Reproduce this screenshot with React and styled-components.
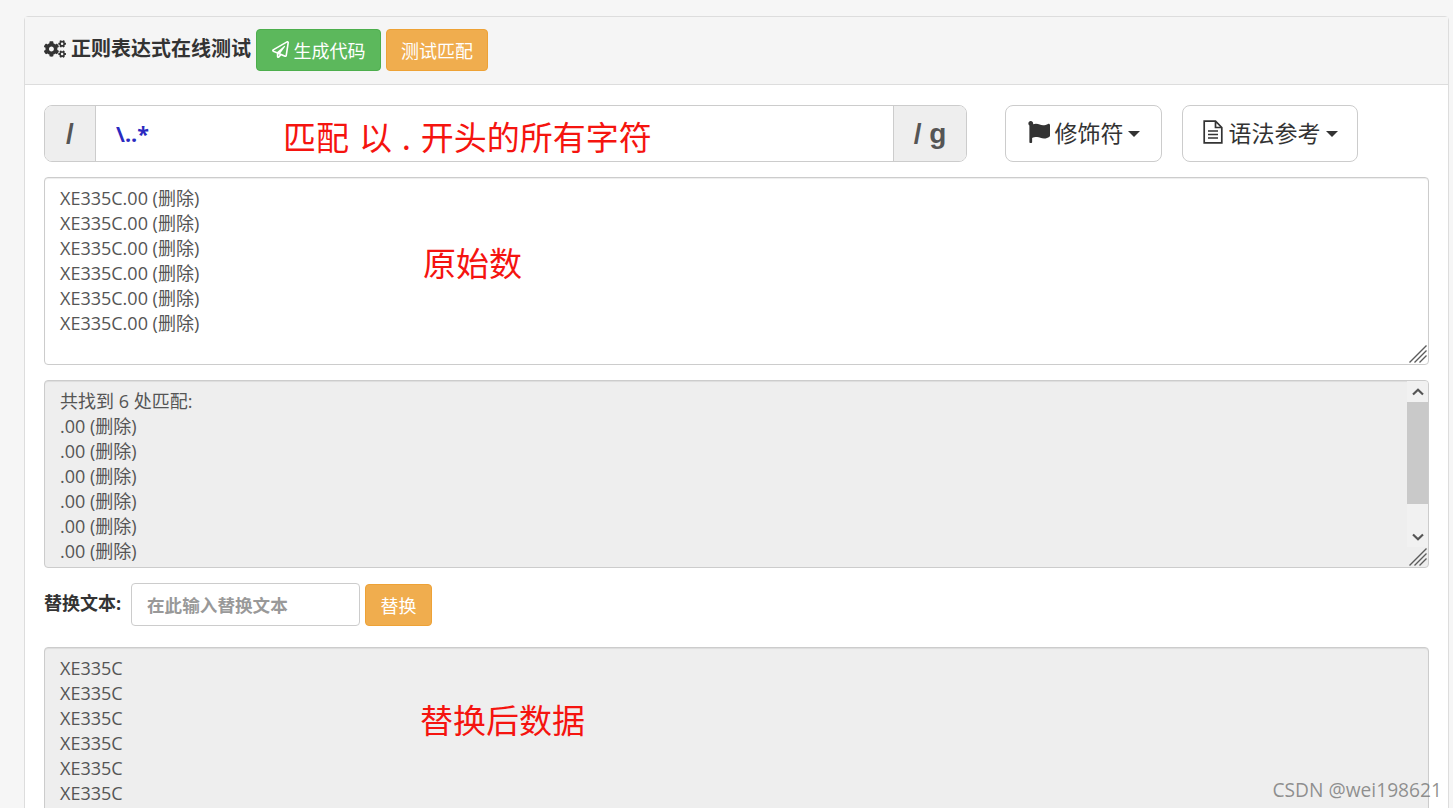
import React from "react";
import styled, { createGlobalStyle } from "styled-components";
import { FaCogs, FaRegPaperPlane, FaFlag } from "react-icons/fa";

const FONT = `"Open Sans", "Noto Sans CJK SC", sans-serif`;

const Global = createGlobalStyle`
  html, body { margin: 0; padding: 0; height: 808px; overflow: hidden; background: #f6f6f6; }
  * { box-sizing: border-box; }
  body { font-family: ${FONT}; color: #333; }
`;

const Page = styled.div`
  position: relative;
  height: 808px;
  overflow: hidden;
  padding: 16px 4px 0 24px;
`;
const Panel = styled.section`
  background: #fff;
  border: 1px solid #ddd;
  border-radius: 4px 4px 0 0;
  height: 840px;
`;
const Header = styled.header`
  display: flex;
  align-items: center;
  height: 68px;
  padding: 0 19px 2px;
  background: #f5f5f5;
  border-bottom: 1px solid #ddd;
`;
const Title = styled.h3`
  display: flex;
  align-items: center;
  gap: 5px;
  margin: -2px 5px 0 0;
  font-size: 20px;
  line-height: 24px;
  font-weight: 700;
  color: #333;
  svg { font-size: 22px; }
`;
const Button = styled.button`
  display: inline-flex;
  align-items: center;
  justify-content: center;
  gap: 5px;
  height: 42px;
  width: ${p => p.$w}px;
  margin-left: ${p => p.$ml || 0}px;
  padding: 0;
  font-family: ${FONT};
  font-size: 18px;
  color: #fff;
  border-radius: 4px;
  border: 1px solid ${p => (p.$variant === "success" ? "#4cae4c" : "#eea236")};
  background: ${p => (p.$variant === "success" ? "#5cb85c" : "#f0ad4e")};
`;
const Body = styled.div`
  display: flex;
  flex-direction: column;
  padding: 20px 19px 0;
`;
const RegexRow = styled.div`
  display: flex;
  align-items: stretch;
  height: 57px;
`;
const InputGroup = styled.div`
  position: relative;
  display: flex;
  width: 923px;
  border: 1px solid #ccc;
  border-radius: 8px;
  overflow: hidden;
`;
const Addon = styled.span`
  display: flex;
  align-items: center;
  justify-content: center;
  width: ${p => p.$w}px;
  flex: none;
  background: #eee;
  color: #555;
  font-size: 28px;
  font-weight: 700;
  font-family: "Liberation Sans", sans-serif;
  border-${p => p.$side}: 1px solid #ccc;
`;
const RegexInput = styled.input`
  flex: 1;
  min-width: 0;
  border: 0;
  outline: 0;
  padding: 0 20px;
  font-family: "Open Sans", sans-serif;
  font-size: 21.5px;
  font-weight: 700;
  color: #2a2ac0;
  background: #fff;
`;
const DropButton = styled.button`
  display: inline-flex;
  align-items: center;
  justify-content: center;
  gap: ${p => p.$gap || 5}px;
  width: ${p => p.$w}px;
  margin-left: ${p => p.$ml}px;
  padding: 0 0 3px;
  background: #fff;
  border: 1px solid #ccc;
  border-radius: 8px;
  color: #333;
  font-family: ${FONT};
  font-size: 23px;
  svg { font-size: 22px; flex: none; }
`;
const Caret = styled.span`
  width: 0;
  height: 0;
  border-top: 6px solid #333;
  border-left: 6px solid transparent;
  border-right: 6px solid transparent;
  margin-left: -1px;
  margin-top: 3px;
`;
const BoxWrap = styled.div`
  position: relative;
  margin-top: ${p => p.$mt}px;
  height: ${p => p.$h}px;
  width: 1385px;
`;
const TextBox = styled.textarea`
  display: block;
  width: 100%;
  height: 100%;
  margin: 0;
  padding: 8px 15px;
  font-family: ${FONT};
  font-size: 18px;
  line-height: 25px;
  color: #555;
  border: 1px solid #ccc;
  border-radius: 4px;
  outline: 0;
  resize: none;
  overflow: hidden;
  background: ${p => (p.$muted ? "#eee" : "#fff")};
  box-shadow: inset 0 1px 1px rgba(0, 0, 0, 0.075);
`;
const GripMark = styled.svg`
  position: absolute;
  right: 1px;
  bottom: 1px;
  width: 20px;
  height: 20px;
`;
const ScrollBar = styled.div`
  position: absolute;
  top: 1px;
  right: 1px;
  width: 21px;
  height: 166px;
  display: flex;
  flex-direction: column;
  background: #f1f1f1;
  border-top-right-radius: 3px;
`;
const ScrollArrow = styled.div`
  flex: none;
  height: 21px;
  display: flex;
  align-items: center;
  justify-content: center;
`;
const ScrollThumb = styled.div`
  flex: none;
  height: 102px;
  background: #c9c9c9;
`;
const ScrollRest = styled.div`
  flex: 1;
`;
const ReplaceRow = styled.div`
  display: flex;
  align-items: center;
  margin-top: 15px;
  height: 43px;
`;
const Label = styled.label`
  font-size: 18px;
  font-weight: 700;
  color: #333;
  width: 87px;
  flex: none;
  margin-top: -6px;
  white-space: nowrap;
`;
const ReplaceInput = styled.input`
  width: 229px;
  height: 43px;
  padding: 0 15px;
  border: 1px solid #ccc;
  border-radius: 4px;
  outline: 0;
  font-family: ${FONT};
  font-size: 17.6px;
  font-weight: 700;
  &::placeholder { color: #999; opacity: 1; }
`;
const Note = styled.span`
  position: absolute;
  left: ${p => p.$x}px;
  top: ${p => p.$y}px;
  font-family: "Noto Sans CJK SC", sans-serif;
  font-size: 33px;
  line-height: 40px;
  word-spacing: 2.5px;
  color: #f5140f;
  white-space: nowrap;
  pointer-events: none;
`;
const Watermark = styled.div`
  position: absolute;
  right: 11px;
  bottom: 6px;
  font-family: "Open Sans", sans-serif;
  font-size: 19.2px;
  line-height: 24px;
  color: rgba(110, 110, 110, 0.75);
`;

const Chevron = ({ down }) => (
  <svg width="12" height="8" viewBox="0 0 12 8" aria-hidden="true">
    <path d={down ? "M1 1.5 L6 6.2 L11 1.5" : "M1 6.5 L6 1.8 L11 6.5"} fill="none" stroke="#555" strokeWidth="2.2" />
  </svg>
);

const Grip = () => (
  <GripMark viewBox="0 0 20 20" aria-hidden="true">
    <path d="M1.5 18.5 L18.5 1.5 M6.5 18.5 L18.5 6.5 M11.5 18.5 L18.5 11.5" fill="none" stroke="#5c5c5c" strokeWidth="1.4" />
  </GripMark>
);

const FileIcon = () => (
  <svg width="20" height="24" viewBox="0 0 20 24" aria-hidden="true">
    <path
      d="M2 1.2 H12.5 L18.8 7.5 V22.8 H1.2 V1.2 Z M12.5 1.2 V7.5 H18.8 M5 11 H15 M5 14.5 H15 M5 18 H15"
      fill="none"
      stroke="#333"
      strokeWidth="1.7"
    />
  </svg>
);

const ORIGINAL = Array(6).fill("XE335C.00 (删除)").join("\n");
const MATCHES = ["共找到 6 处匹配:", ...Array(6).fill(".00 (删除)")].join("\n");
const REPLACED = Array(6).fill("XE335C").join("\n");

export default function App() {
  return (
    <Page>
      <Global />
      <Panel>
        <Header>
          <Title>
            <FaCogs />
            正则表达式在线测试
          </Title>
          <Button $variant="success" $w={125}>
            <FaRegPaperPlane size={17} />
            生成代码
          </Button>
          <Button $variant="warning" $w={102} $ml={5}>测试匹配</Button>
        </Header>
        <Body>
          <RegexRow>
            <InputGroup>
              <Addon $w={51} $side="right">/</Addon>
              <RegexInput readOnly value="\..*" />
              <Addon $w={73} $side="left">/ g</Addon>
            </InputGroup>
            <DropButton $w={157} $ml={38}>
              <FaFlag />
              修饰符
              <Caret />
            </DropButton>
            <DropButton $w={176} $ml={20} $gap={6}>
              <FileIcon />
              语法参考
              <Caret />
            </DropButton>
          </RegexRow>
          <BoxWrap $mt={15} $h={188}>
            <TextBox readOnly value={ORIGINAL} />
            <Grip />
          </BoxWrap>
          <BoxWrap $mt={15} $h={188}>
            <TextBox $muted readOnly value={MATCHES} />
            <ScrollBar>
              <ScrollArrow><Chevron /></ScrollArrow>
              <ScrollThumb />
              <ScrollRest />
              <ScrollArrow><Chevron down /></ScrollArrow>
            </ScrollBar>
            <Grip />
          </BoxWrap>
          <ReplaceRow>
            <Label>替换文本:</Label>
            <ReplaceInput placeholder="在此输入替换文本" />
            <Button $variant="warning" $w={67} $ml={5}>替换</Button>
          </ReplaceRow>
          <BoxWrap $mt={21} $h={188}>
            <TextBox $muted readOnly value={REPLACED} />
          </BoxWrap>
        </Body>
      </Panel>
      <Note $x={283} $y={116}>匹配 以 . 开头的所有字符</Note>
      <Note $x={423} $y={242}>原始数</Note>
      <Note $x={420} $y={699}>替换后数据</Note>
      <Watermark>CSDN @wei198621</Watermark>
    </Page>
  );
}
